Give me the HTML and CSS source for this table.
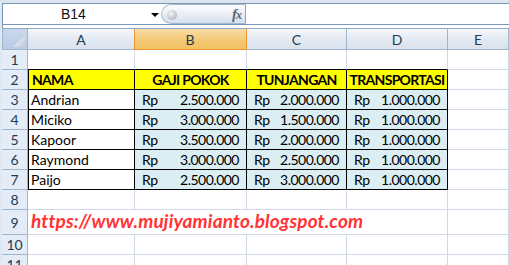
FILE: index.html
```html
<!DOCTYPE html>
<html>
<head>
<meta charset="utf-8">
<link rel="stylesheet" href="styles.css">
</head>
<body>
<div class="top-band"></div>
<div class="fbar">
  <div class="namebox"><span class="nb-text">B14</span><span class="nb-arrow"></span></div>
  <div class="fx-ctrl">
    <span class="knob"></span>
    <span class="fx">f<i>x</i></span>
  </div>
  <div class="finput"></div>
</div>
<div class="gap"></div>
<div class="sheet">
  <div class="corner"><svg width="12" height="12" viewBox="0 0 12 12"><defs><linearGradient id="tg" x1="0" y1="0" x2="1" y2="1"><stop offset="0" stop-color="#ffffff"/><stop offset="1" stop-color="#b9c6d6"/></linearGradient></defs><polygon points="12,0 12,12 0,12" fill="url(#tg)"/></svg></div>
  <div class="ch">A</div>
  <div class="ch sel">B</div>
  <div class="ch">C</div>
  <div class="ch">D</div>
  <div class="ch">E</div>

  <div class="rh">1</div>
  <div class="c above"></div><div class="c above"></div><div class="c above"></div><div class="c above"></div><div class="c"></div>

  <div class="rh">2</div>
  <div class="c tb first hd left">NAMA</div>
  <div class="c tb hd">GAJI POKOK</div>
  <div class="c tb hd">TUNJANGAN</div>
  <div class="c tb hd">TRANSPORTASI</div>
  <div class="c"></div>

  <div class="rh">3</div>
  <div class="c tb first nm">Andrian</div>
  <div class="c tb val"><span>Rp</span><span>2.500.000</span></div>
  <div class="c tb val"><span>Rp</span><span>2.000.000</span></div>
  <div class="c tb val"><span>Rp</span><span>1.000.000</span></div>
  <div class="c"></div>

  <div class="rh">4</div>
  <div class="c tb first nm">Miciko</div>
  <div class="c tb val"><span>Rp</span><span>3.000.000</span></div>
  <div class="c tb val"><span>Rp</span><span>1.500.000</span></div>
  <div class="c tb val"><span>Rp</span><span>1.000.000</span></div>
  <div class="c"></div>

  <div class="rh">5</div>
  <div class="c tb first nm">Kapoor</div>
  <div class="c tb val"><span>Rp</span><span>3.500.000</span></div>
  <div class="c tb val"><span>Rp</span><span>2.000.000</span></div>
  <div class="c tb val"><span>Rp</span><span>1.000.000</span></div>
  <div class="c"></div>

  <div class="rh">6</div>
  <div class="c tb first nm">Raymond</div>
  <div class="c tb val"><span>Rp</span><span>3.000.000</span></div>
  <div class="c tb val"><span>Rp</span><span>2.500.000</span></div>
  <div class="c tb val"><span>Rp</span><span>1.000.000</span></div>
  <div class="c"></div>

  <div class="rh">7</div>
  <div class="c tb first nm">Paijo</div>
  <div class="c tb val"><span>Rp</span><span>2.500.000</span></div>
  <div class="c tb val"><span>Rp</span><span>3.000.000</span></div>
  <div class="c tb val"><span>Rp</span><span>1.000.000</span></div>
  <div class="c"></div>

  <div class="rh">8</div>
  <div class="c"></div><div class="c"></div><div class="c"></div><div class="c"></div><div class="c"></div>

  <div class="rh">9</div>
  <div class="c url">https://www.mujiyamianto.blogspot.com</div><div class="c"></div>

  <div class="rh">10</div>
  <div class="c"></div><div class="c"></div><div class="c"></div><div class="c"></div><div class="c"></div>

  <div class="rh">11</div>
  <div class="c"></div><div class="c"></div><div class="c"></div><div class="c"></div><div class="c"></div>
</div>
</body>
</html>
```

FILE: styles.css
```css
* { box-sizing: border-box; }
html, body {
  margin: 0;
  padding: 0;
  width: 509px;
  height: 265px;
  overflow: hidden;
  background: #dfe7f1;
  font-family: "Lato", "Liberation Sans", sans-serif;
  font-size: 14px;
  color: #000;
}
.top-band {
  height: 3px;
  background: #dbe4ef;
}
.fbar {
  display: flex;
  height: 22px;
  margin-left: 2px;
  border-top: 1px solid #7c96b6;
  border-bottom: 1px solid #7c96b6;
  border-left: 1px solid #7c96b6;
  background: #fff;
}
.namebox {
  width: 158px;
  display: flex;
  align-items: center;
  position: relative;
  font-family: "Liberation Sans", sans-serif;
  font-size: 14px;
}
.nb-text {
  margin-left: 58px;
  color: #111;
}
.nb-arrow {
  position: absolute;
  left: 148px;
  top: 9px;
  width: 0;
  height: 0;
  border-left: 4px solid transparent;
  border-right: 4px solid transparent;
  border-top: 4px solid #000;
}
.fx-ctrl {
  width: 85px;
  display: flex;
  align-items: center;
  border: 1px solid #a5b8cf;
  border-right: 1px solid #8ba2bf;
  border-radius: 10px 0 0 10px;
  background: linear-gradient(#fdfdfe, #e6ecf4 60%, #d5dfeb);
  position: relative;
}
.knob {
  position: absolute;
  left: 5px;
  top: 5px;
  width: 10px;
  height: 10px;
  border-radius: 50%;
  background: radial-gradient(circle at 40% 35%, #f4f4f4, #c2c6cc 60%, #9da3ab);
}
.fx {
  margin-left: auto;
  margin-right: 4px;
  font-family: "Liberation Serif", serif;
  font-style: italic;
  font-weight: bold;
  font-size: 15px;
  color: #5a6472;
  letter-spacing: -1px;
}
.fx i { font-size: 12px; }
.finput {
  flex: 1;
  background: #fff;
}
.gap {
  height: 3px;
  margin-left: 2px;
  background: #fff;
  border-left: 1px solid #7c96b6;
}
.sheet {
  display: grid;
  margin-left: 2px;
  grid-template-columns: 26px 107px 112px 100px 101px 1fr;
  grid-template-rows: 21px 20px 20px 20px 20px 20px 20px 20px 20px 25px 20px 20px;
  background: #fff;
  border-top: 1px solid #8ea9c8;
}
.corner {
  background: linear-gradient(#c9d8ec, #b9cce6);
  border-right: 1px solid #9eb6ce;
  border-bottom: 1px solid #9eb6ce;
  border-left: 1px solid #9eb6ce;
  display: flex;
  align-items: flex-end;
  justify-content: flex-end;
  padding: 0 2px 2px 0;
}
.ch {
  background: linear-gradient(#f6f8fb, #e4eaf3 50%, #d9e1ec);
  border-right: 1px solid #9eb6ce;
  border-bottom: 1px solid #9eb6ce;
  display: flex;
  align-items: center;
  justify-content: center;
  font-size: 14px;
  color: #243a52;
}
.ch.sel {
  background: linear-gradient(#f9dca5, #f4c874 60%, #f1c15f);
  border-right: 1px solid #f29536;
  border-bottom: 1px solid #f29536;
  box-shadow: inset 1px 0 0 #f29536;
  margin-left: -1px;
}
.rh {
  background: #e4ecf7;
  border-right: 1px solid #9eb6ce;
  border-bottom: 1px solid #9eb6ce;
  display: flex;
  align-items: center;
  justify-content: center;
  font-size: 14px;
  color: #243a52;
}
.c {
  border-right: 1px solid #d0d7e5;
  border-bottom: 1px solid #d0d7e5;
  display: flex;
  align-items: flex-end;
  padding: 0 3px 1px 3px;
  white-space: nowrap;
}
.c.above { border-bottom-color: #000; }
.c.tb {
  border-right-color: #000;
  border-bottom-color: #000;
}
.c.first { border-left: 1px solid #000; }
.hd {
  background: #ffff00;
  font-weight: bold;
  justify-content: center;
  letter-spacing: -0.7px;
}
.hd.left { justify-content: flex-start; }
.nm { padding-left: 2px; }
.val {
  background: #daeef3;
  justify-content: space-between;
  padding: 0 7px 1px 7px;
  letter-spacing: -0.5px;
}
.url {
  grid-column: span 4;
  font-weight: bold;
  font-style: italic;
  font-size: 19px;
  color: #ff3333;
  padding-bottom: 2px;
  letter-spacing: 0.15px;
}
```
